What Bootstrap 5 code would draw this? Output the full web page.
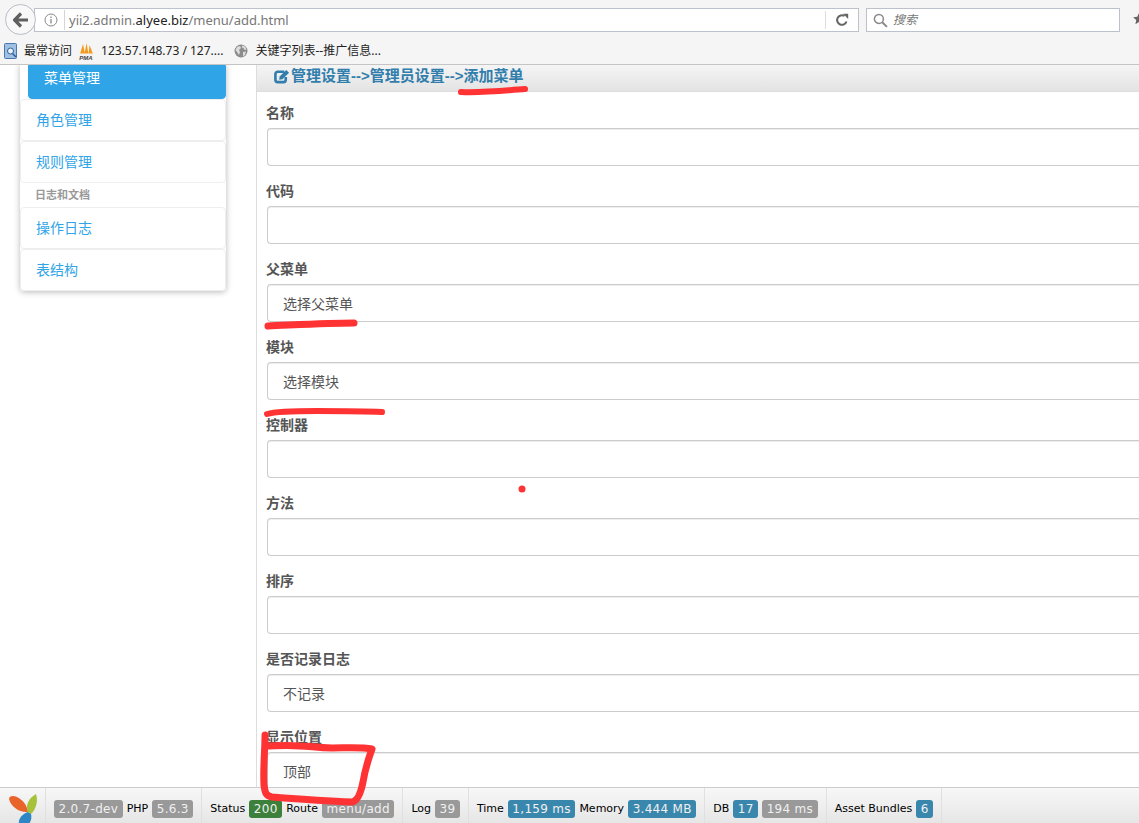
<!DOCTYPE html>
<html lang="zh-CN">
<head>
<meta charset="UTF-8"/>
<meta name="viewport" content="width=device-width,initial-scale=1.0"/>
<title>添加菜单</title>
<link href="https://cdn.jsdelivr.net/npm/bootstrap@5.3.0/dist/css/bootstrap.min.css" rel="stylesheet">
<style>
html, body { height: 823px; overflow: hidden; }
body { font-family: "Liberation Sans", "Noto Sans CJK SC", sans-serif; font-size: 14px; color: #555; background: #fff; position: relative; }

/* browser chrome */
.fx-chrome { height: 65px; background: #f5f5f5; border-bottom: 1px solid #c4c4c4; font-family: "Noto Sans", "Noto Sans CJK SC", sans-serif; }
.fx-top { height: 40px; padding: 8px 0 0 5px; }
.fx-back { width: 31px; height: 31px; border-radius: 50%; border: 1px solid #b8bcc6; background: #f8f8f8; margin-top: -4px; z-index: 1; flex: none; }
.fx-url { width: 825px; height: 24px; margin-left: -2px; background: #fff; border: 1px solid #bcc1cb; padding-left: 8px; }
.fx-host { font-size: 13px; color: #777; flex-grow: 1; margin-left: 5px; padding-left: 4px; border-left: 1px solid #d5d5d5; line-height: 20px; white-space: nowrap; }
.fx-host b { font-weight: 400; color: #222; }
.fx-reload { border-left: 1px solid #ddd; height: 18px; width: 33px; flex: none; }
.fx-search { width: 254px; height: 24px; margin-left: 7px; background: #fff; border: 1px solid #bcc1cb; padding-left: 6px; font-size: 12px; color: #777; font-style: italic; gap: 5px; }
.fx-star { margin-left: 13px; margin-top: 4px; }
.fx-marks { height: 24px; padding-left: 4px; font-size: 12px; color: #222; white-space: nowrap; margin-top: -1px; }
.mark-a { margin-left: 6px; }
.mark-b { margin-left: 6px; }
.mark-c { margin-left: 7px; }
.mark-d { margin-left: 11px; }
.mark-e { margin-left: 7px; }

/* page */
.pg-side { width: 256px; height: 758px; padding-left: 20px; overflow: hidden; flex: none; }
.pg-menu { width: 206px; box-shadow: 0 1px 6px rgba(0,0,0,.28); border-radius: 0 0 4px 4px; margin-top: -1px; padding-top: 1px; background: #fff; }
.pg-item { display: block; height: 42px; line-height: 40px; padding-left: 15px; color: #2fa4e7; background: #fff; border: 1px solid #eee; border-radius: 4px; text-decoration: none; }
.pg-item.is-on { height: 34px; line-height: 25px; margin-left: 8px; color: #fff; background: #2fa4e7; border-color: #2fa4e7; border-radius: 0 0 4px 4px; }
.pg-head { height: 24px; line-height: 24px; padding-left: 15px; font-size: 11px; font-weight: 700; color: #999; }
.pg-main { flex-grow: 1; border-left: 1px solid #ddd; }
.pg-title { height: 27px; padding: 0 0 4px 17px; font-size: 15px; font-weight: 700; color: #317eac; line-height: 22px; background: linear-gradient(#f5f5f5, #e3e3e3); border-bottom: 1px solid #ddd; }
.pg-title span { margin-left: 1px; }
.pg-form { padding: 11px 0 0 10px; }
.pg-row { height: 78px; }
.pg-row .form-label { display: block; font-weight: 700; font-size: 14px; margin: 0 0 5px -1px; line-height: 20px; color: #555; }
.pg-row .form-control, .pg-row .form-select { height: 38px; border: 1px solid #ccc; border-right: 0; border-radius: 4px 0 0 4px; padding: 0 15px; font-size: 14px; color: #555; background-image: none; box-shadow: inset 0 1px 1px rgba(0,0,0,.075); }
.pg-row .form-select { padding-top: 2px; }

/* debug toolbar */
.yii-bar { position: fixed; left: 0; right: 0; bottom: 0; height: 36px; font-family: "DejaVu Sans", sans-serif; font-size: 11px; color: #000; background: linear-gradient(#f7f7f7, #e6e6e6); border-top: 1px solid #ccc; }
.yii-logo { width: 46px; border-right: 1px solid #e0e0e0; overflow: hidden; flex: none; }
.yii-block { height: 100%; padding: 7px 8px 0; gap: 4px; border-right: 1px solid #e0e0e0; white-space: nowrap; flex: none; }
.yii-tag { display: inline-block; height: 18px; line-height: 18px; padding: 0 4.5px; border-radius: 3px; color: #f0f0f0; font-size: 12px; letter-spacing: .3px; background: #999; text-align: center; }
.yii-tag.t-ok { background: #3c803c; }
.yii-tag.t-info { background: #3a87ad; }

.ink { position: fixed; left: 0; top: 0; z-index: 10; pointer-events: none; }
</style>
</head>
<body>

<div class="fx-chrome">
  <div class="fx-top d-flex align-items-start">
    <div class="fx-back d-flex align-items-center justify-content-center">
      <svg width="16" height="16" viewBox="0 0 16 16"><path d="M8 1.500 1.500 8 8 14.500M2 8h13" fill="none" stroke="#5f5f5f" stroke-width="3.200"/></svg>
    </div>
    <div class="fx-url d-flex align-items-center">
      <svg width="16" height="16" viewBox="0 0 16 16" class="flex-shrink-0"><circle cx="8" cy="8" r="6" fill="none" stroke="#8a8a8a"/><path d="M8 7v4.500M8 4.500v1.500" stroke="#8a8a8a" stroke-width="1.300"/></svg>
      <div class="fx-host">yii2.admin.<b>alyee.biz</b>/menu/add.html</div>
      <div class="fx-reload d-flex align-items-center justify-content-center">
        <svg width="14" height="14" viewBox="0 0 14 14"><path d="M11.500 8.500A4.800 4.800 0 1 1 9.500 3" fill="none" stroke="#666" stroke-width="2"/><path d="M8 .8h5.200V6z" fill="#666"/></svg>
      </div>
    </div>
    <div class="fx-search d-flex align-items-center">
      <svg width="15" height="15" viewBox="0 0 14 14"><circle cx="5.500" cy="5.500" r="4.200" fill="none" stroke="#888" stroke-width="1.400"/><path d="M8.600 8.600 13 13" stroke="#888" stroke-width="1.800"/></svg>
      <span>搜索</span>
    </div>
    <svg width="6" height="14" viewBox="0 0 6 14" class="fx-star"><path d="M6 1l1.700 3.800 4.200.5-3.100 2.800.8 4.100L6 10.100 2.400 12.200l.8-4.100L.1 5.300l4.200-.5z" fill="#666"/></svg>
  </div>
  <div class="fx-marks d-flex align-items-center">
    <svg width="14" height="16" viewBox="0 0 14 16"><rect x=".5" y=".5" width="12" height="15" rx="1" fill="#9fc0e4" stroke="#4b78ad"/><circle cx="6.500" cy="8" r="3" fill="#eaf3fb" stroke="#2f5f96"/><path d="M8.500 10.500 12 14" stroke="#2f5f96" stroke-width="1.500"/></svg>
    <span class="mark-a">最常访问</span>
    <svg width="16" height="17" viewBox="0 0 16 17" class="mark-b"><path d="M2 11 5 1l2 10zM6.500 11 8.500 0l2 11zM10.500 11 11.500 2 15 11z" fill="#f29a1f"/><rect y="10.500" width="16" height="6.500" fill="#f3f3f3"/><text x="8" y="16.500" text-anchor="middle" font-size="6" font-weight="700" font-style="italic" font-family="Liberation Sans" fill="#444">PMA</text></svg>
    <span class="mark-c">123.57.148.73 / 127....</span>
    <svg width="14" height="14" viewBox="0 0 14 14" class="mark-d"><circle cx="7" cy="7" r="6.500" fill="#8c8c8c"/><path d="M3 3l3-1 1 2-2 2 1 2-1 3-2-3-1.500-2zM8 1.500l3 1 1.500 3-2 .5-1-2-1.500-.5zM9 8l3-.5-1 3.500-2 1.500z" fill="#dcdcdc"/></svg>
    <span class="mark-e">关键字列表--推广信息...</span>
  </div>
</div>

<div class="d-flex">
  <div class="pg-side">
    <div class="pg-menu">
      <a class="pg-item is-on" href="#">菜单管理</a>
      <a class="pg-item" href="#">角色管理</a>
      <a class="pg-item" href="#">规则管理</a>
      <div class="pg-head">日志和文档</div>
      <a class="pg-item" href="#">操作日志</a>
      <a class="pg-item" href="#">表结构</a>
    </div>
  </div>
  <div class="pg-main">
    <div class="pg-title d-flex align-items-center">
      <svg width="16" height="15" viewBox="0 0 17 15"><path d="M11 2.500H4A2.500 2.500 0 0 0 1.500 5v6A2.500 2.500 0 0 0 4 13.500h6a2.500 2.500 0 0 0 2.500-2.500V8" fill="none" stroke="#317eac" stroke-width="2.800"/><path d="M6 7.500 13 .5l3 3L9 10.500 5.500 11z" fill="#317eac"/></svg>
      <span>管理设置--&gt;管理员设置--&gt;添加菜单</span>
    </div>
    <form class="pg-form" autocomplete="off">
      <div class="pg-row"><label class="form-label">名称</label><input class="form-control"></div>
      <div class="pg-row"><label class="form-label">代码</label><input class="form-control"></div>
      <div class="pg-row"><label class="form-label">父菜单</label><select class="form-select"><option>选择父菜单</option></select></div>
      <div class="pg-row"><label class="form-label">模块</label><select class="form-select"><option>选择模块</option></select></div>
      <div class="pg-row"><label class="form-label">控制器</label><input class="form-control"></div>
      <div class="pg-row"><label class="form-label">方法</label><input class="form-control"></div>
      <div class="pg-row"><label class="form-label">排序</label><input class="form-control"></div>
      <div class="pg-row"><label class="form-label">是否记录日志</label><select class="form-select"><option>不记录</option></select></div>
      <div class="pg-row"><label class="form-label">显示位置</label><select class="form-select"><option>顶部</option></select></div>
    </form>
  </div>
</div>

<div class="yii-bar d-flex">
  <div class="yii-logo">
    <svg width="46" height="36" viewBox="0 0 46 36">
      <path d="M9 11c0-3 4-4 8-2 6 3 10 8 11 15-8 1-17-5-19-13z" fill="#e8642a"/>
      <path d="M28 24c-3-7 1-14 8-18 2 6 1 14-5 20z" fill="#a5c23a"/>
      <path d="M19 36c-1-5 3-10 9-12l3 2c1 4 0 7-2 10z" fill="#2f86c5"/>
    </svg>
  </div>
  <div class="yii-block d-flex align-items-center"><span class="yii-tag">2.0.7-dev</span><span>PHP</span><span class="yii-tag">5.6.3</span></div>
  <div class="yii-block d-flex align-items-center"><span>Status</span><span class="yii-tag t-ok">200</span><span>Route</span><span class="yii-tag">menu/add</span></div>
  <div class="yii-block d-flex align-items-center"><span>Log</span><span class="yii-tag">39</span></div>
  <div class="yii-block d-flex align-items-center"><span>Time</span><span class="yii-tag t-info">1,159 ms</span><span>Memory</span><span class="yii-tag t-info">3.444 MB</span></div>
  <div class="yii-block d-flex align-items-center"><span>DB</span><span class="yii-tag t-info">17</span><span class="yii-tag">194 ms</span></div>
  <div class="yii-block d-flex align-items-center"><span>Asset Bundles</span><span class="yii-tag t-info">6</span></div>
</div>

<svg class="ink" width="1139" height="823" viewBox="0 0 1139 823" fill="none" stroke="#f33" stroke-linecap="round" stroke-linejoin="round">
  <path d="M461 92c20 1 40-1 64-3" stroke-width="6"/>
  <path d="M268 326c25-1 60-3 86-3" stroke-width="7"/>
  <path d="M267 414c10-3 30-3 50-3 20 0 45 0 65 1" stroke-width="6"/>
  <circle cx="522" cy="489" r="3.500" fill="#f33" stroke="none"/>
  <path d="M265 735c0 15-2 35-1 50 1 8 2 11 8 12 25 2 50 4 80 5 6-1 9-10 11-20 2-12 5-22 9-33-10-2-25-1-40-1-15 0-22-2-32-2-15-1-25 0-33 0" stroke-width="7"/>
</svg>

</body>
</html>
